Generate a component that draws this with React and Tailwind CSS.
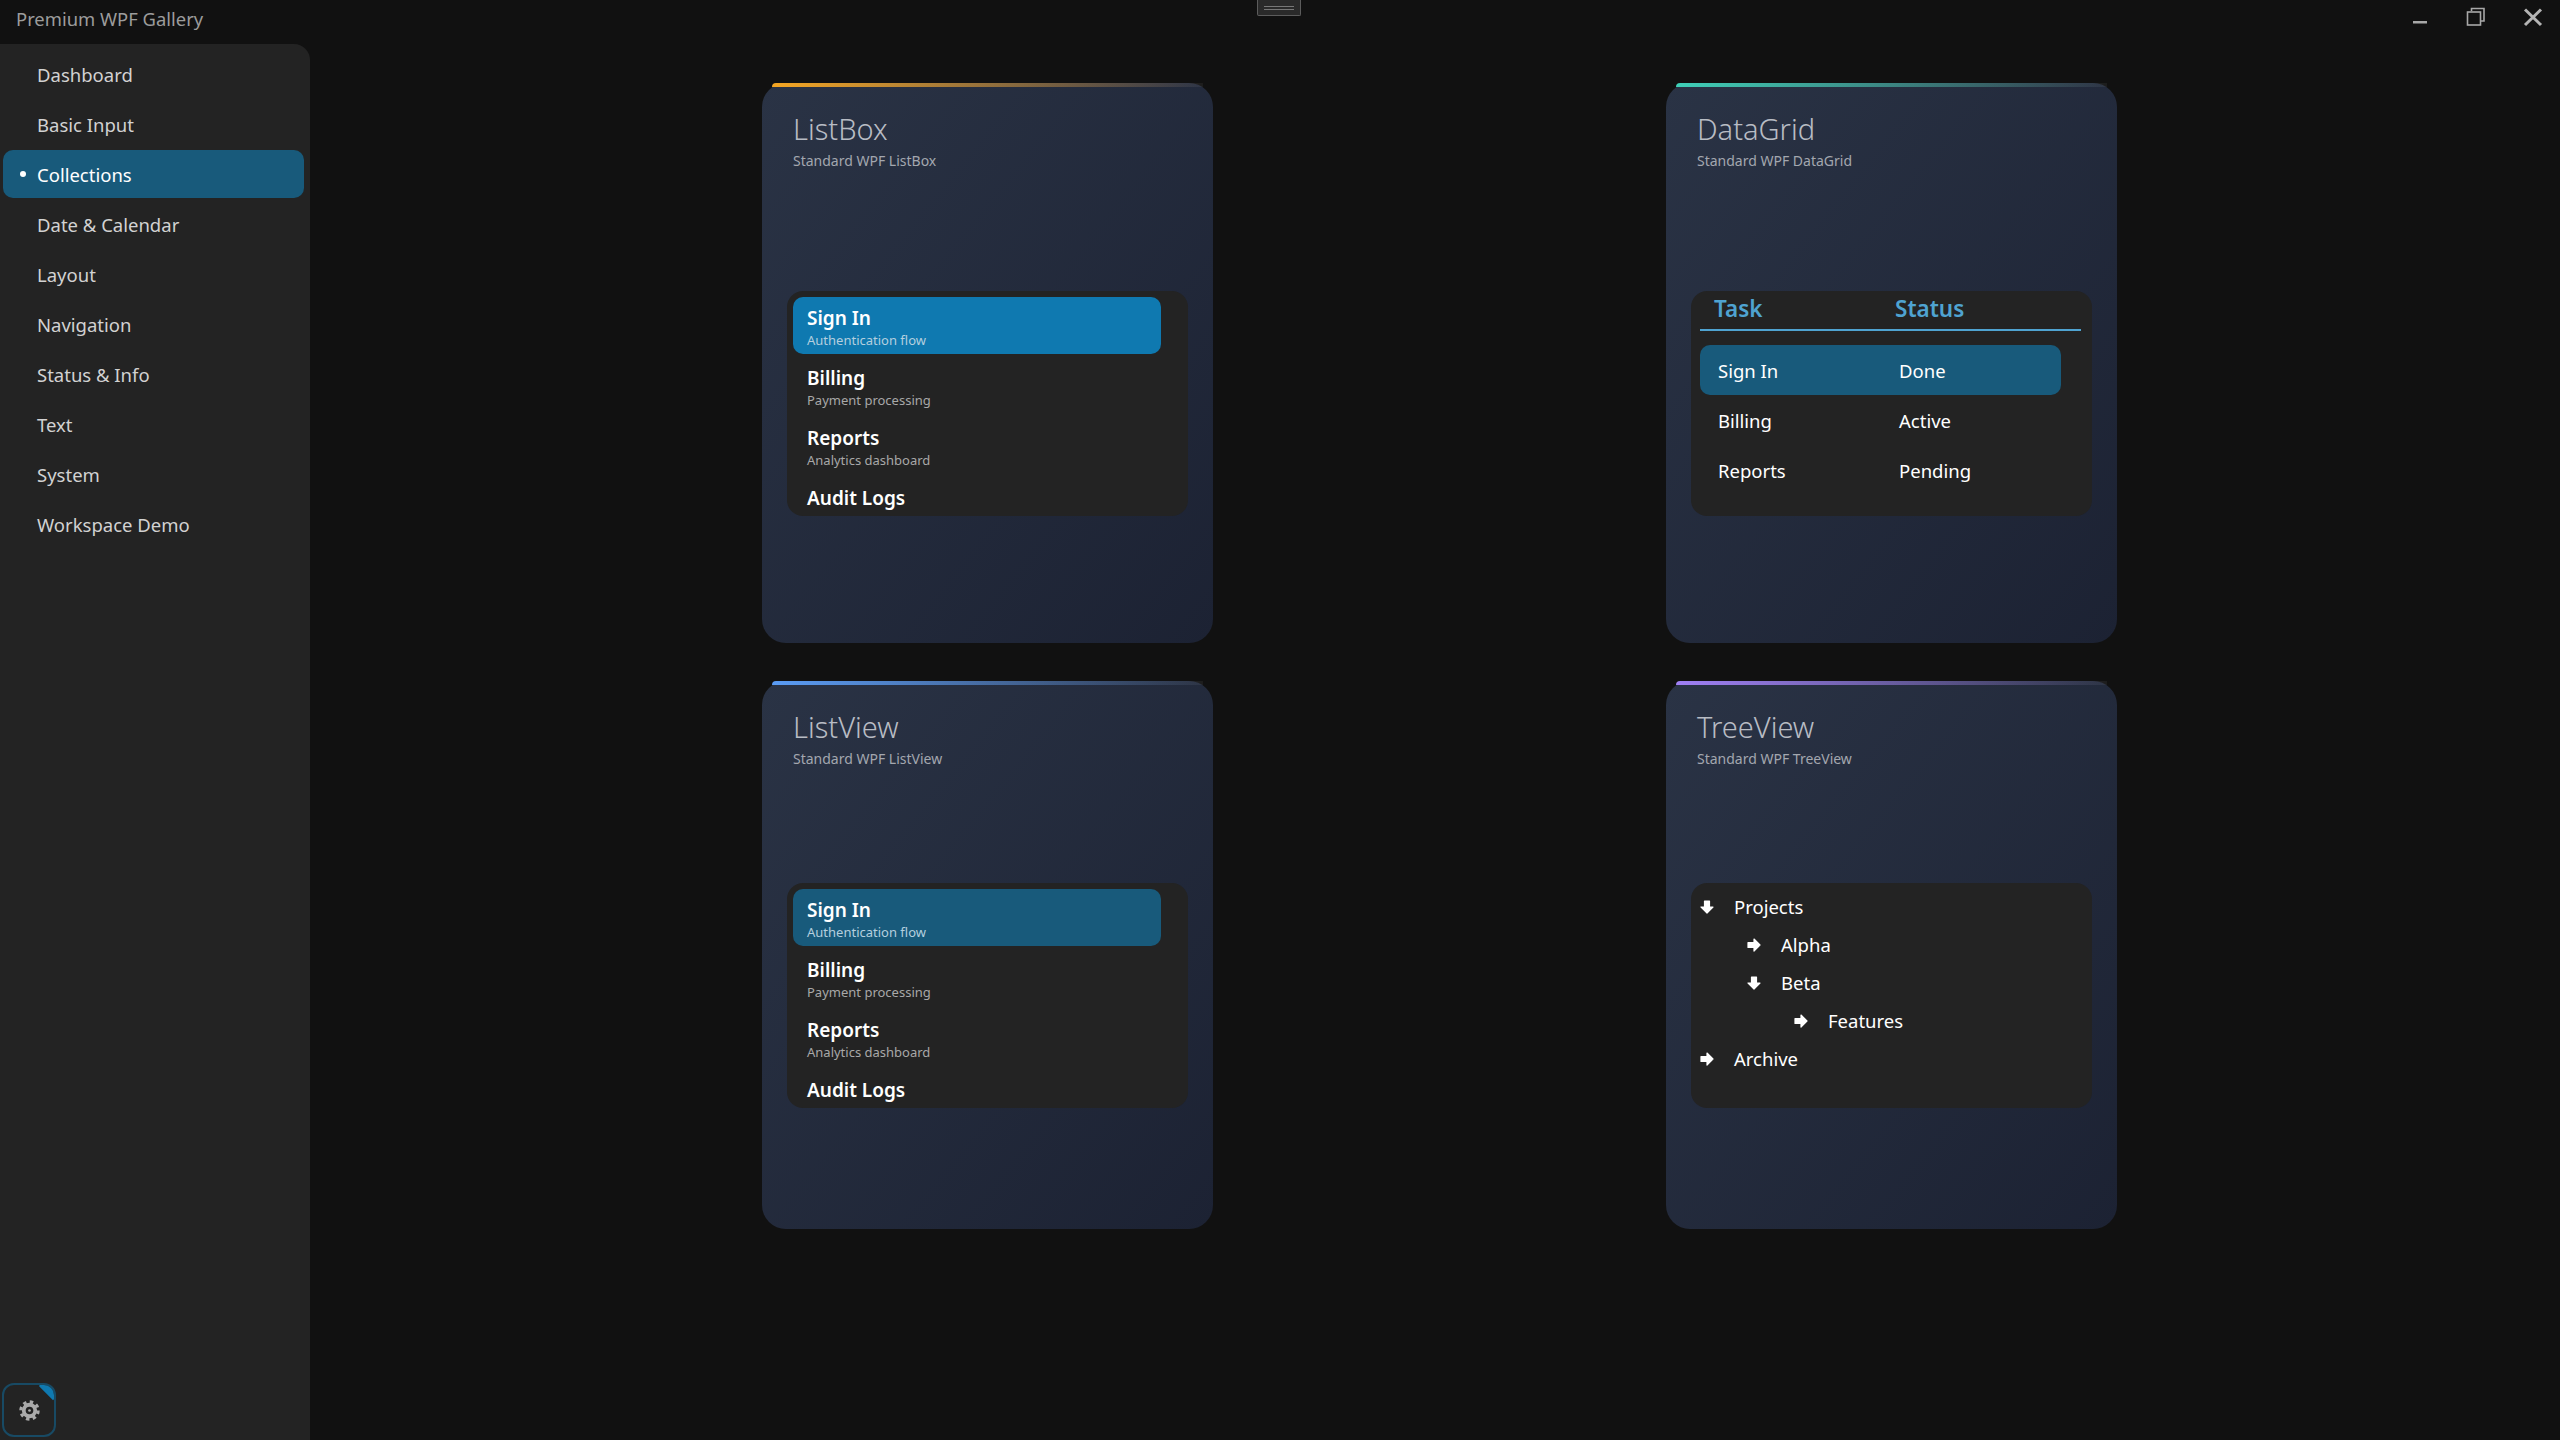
import { Fragment } from 'react';

const NAV = ['Dashboard', 'Basic Input', 'Collections', 'Date & Calendar', 'Layout', 'Navigation', 'Status & Info', 'Text', 'System', 'Workspace Demo'];

const LIST_ITEMS = [
  { title: 'Sign In', sub: 'Authentication flow' },
  { title: 'Billing', sub: 'Payment processing' },
  { title: 'Reports', sub: 'Analytics dashboard' },
  { title: 'Audit Logs', sub: '' },
];

const ROWS = [
  ['Sign In', 'Done'],
  ['Billing', 'Active'],
  ['Reports', 'Pending'],
];

const TREE = [
  { label: 'Projects', depth: 0, open: true },
  { label: 'Alpha', depth: 1 },
  { label: 'Beta', depth: 1, open: true },
  { label: 'Features', depth: 2 },
  { label: 'Archive', depth: 0 },
];

function Arrow({ down }) {
  return (
    <svg width="14" height="14" viewBox="0 0 14 14" className={down ? 'rotate-90' : ''}>
      <path d="M1 4.5H7V1L13 7L7 13V9.5H1Z" fill="#fff" stroke="#fff" strokeWidth="1.2" strokeLinejoin="round" />
    </svg>
  );
}

function Gear() {
  return (
    <svg width="21" height="21" viewBox="0 0 22 22" fill="none" stroke="#ababab">
      <circle cx="11" cy="11" r="9" strokeWidth="3.4" strokeDasharray="3.55 3.52" />
      <circle cx="11" cy="11" r="6" strokeWidth="4" />
      <circle cx="11" cy="11" r="1.4" fill="#ababab" stroke="none" />
    </svg>
  );
}

function Card({ title, stripe, boxTop, height, children }) {
  return (
    <div className={`relative rounded-[24px] bg-gradient-to-br from-[#2a3345] to-[#1c2233] px-[25px] pt-[26px] ${height}`}>
      <div className={`absolute top-0 left-[10px] right-[10px] h-[4px] rounded-tl-[6px] bg-gradient-to-r ${stripe} to-white/5`} />
      <h2 className="pl-[6px] text-[29px] leading-[40px] font-light text-[#b8bcc4]">{title}</h2>
      <p className="pl-[6px] pt-[2px] text-[14px] leading-[20px] text-[#a3a7af]">Standard WPF {title}</p>
      <div className={`${boxTop} h-[225px] overflow-hidden rounded-[16px] bg-[#232323]`}>{children}</div>
    </div>
  );
}

function ItemList({ selected }) {
  return (
    <div className="flex flex-col gap-[3px] pt-[6px] pl-[6px]">
      {LIST_ITEMS.map((item, i) => (
        <div key={item.title} className={`h-[57px] w-[368px] shrink-0 rounded-[10px] px-[14px] pt-[7px] ${i === 0 ? selected : ''}`}>
          <div className="text-[19px] leading-[28px] font-semibold text-white">{item.title}</div>
          <div className={`-mt-[1px] text-[13px] leading-[18px] ${i === 0 ? 'text-[#b4cfdf]' : 'text-[#a8a8a8]'}`}>{item.sub}</div>
        </div>
      ))}
    </div>
  );
}

export default function App() {
  return (
    <div className="relative flex h-[1440px] w-[2560px] flex-col overflow-hidden bg-[#111111] font-['Noto_Sans',sans-serif]">
      {/* Title bar */}
      <div className="flex h-[44px] shrink-0 items-start justify-between">
        <span className="pl-[16px] pt-[4px] text-[18.4px] leading-[30px] text-[#9c9c9c]">Premium WPF Gallery</span>
        <div className="flex items-start pt-[7px] pr-[17px]">
          <svg width="18" height="20" viewBox="0 0 18 20" className="mr-[37px]">
            <rect x="2" y="14" width="14" height="2.5" fill="#a8a8a8" />
          </svg>
          <svg width="20" height="20" viewBox="0 0 20 20" fill="none" stroke="#a8a8a8" strokeWidth="1.6" className="mr-[37px]">
            <path d="M5.5 4V1.5H18V14H15" />
            <rect x="1.5" y="5" width="13" height="13" />
          </svg>
          <svg width="20" height="20" viewBox="0 0 20 20" fill="none" stroke="#b4b4b4" strokeWidth="3">
            <path d="M2 2.5L18 18M18 2.5L2 18" />
          </svg>
        </div>
      </div>

      {/* Drag handle */}
      <div className="absolute left-[1257px] top-0 flex h-[16px] w-[44px] items-center justify-center rounded-b-[2px] border border-t-0 border-[#5c5c5c] bg-[#2a2a2a]">
        <div className="h-[4px] w-[30px] border-y border-[#777777]" />
      </div>

      <div className="flex min-h-0 flex-1">
        {/* Sidebar */}
        <aside className="relative flex w-[310px] shrink-0 flex-col rounded-tr-[16px] bg-[#232323] pl-[3px] pt-[6px]">
          {NAV.map(name => {
            const active = name === 'Collections';
            return (
              <div
                key={name}
                className={`relative flex h-[48px] w-[301px] mb-[2px] items-center rounded-[10px] pl-[34px] pt-[2px] text-[18.5px] ${active ? 'bg-[#185a7b] text-white' : 'text-[#d2d2d2]'}`}
              >
                {active && <span className="absolute left-[17px] top-[21px] h-[6px] w-[6px] rounded-full bg-white" />}
                {name}
              </div>
            );
          })}
          <div className="absolute bottom-[3px] left-[2px] flex h-[54px] w-[54px] items-center justify-center overflow-hidden rounded-[12px] border-2 border-[#184a64]">
            <div className="absolute -right-[9px] -top-[9px] h-[20px] w-[20px] rotate-45 bg-[#0f79b0]" />
            <div className="pt-[1px]">
              <Gear />
            </div>
          </div>
        </aside>

        {/* Gallery */}
        <main className="grid flex-1 grid-cols-[451px_451px] grid-rows-[560px_548px] content-start gap-x-[453px] gap-y-[38px] pl-[452px] pt-[39px]">
          <Card title="ListBox" stripe="from-[#f5a623]" boxTop="mt-[120px]" height="h-[560px]">
            <ItemList selected="bg-[#0f79b0]" />
          </Card>

          <Card title="DataGrid" stripe="from-[#3fd0b8]" boxTop="mt-[120px]" height="h-[560px]">
            <div className="pl-[9px] pr-[11px]">
              <div className="grid grid-cols-[181px_1fr] border-b-2 border-[#4fa3d1] pl-[14px] pb-[3px] text-[22.5px] leading-[35px] font-semibold text-[#4fa3d1]">
                <span>Task</span>
                <span>Status</span>
              </div>
              <div className="pt-[14px]">
                {ROWS.map((row, i) => (
                  <div key={row[0]} className={`grid h-[50px] w-[361px] grid-cols-[181px_1fr] items-center rounded-[10px] pl-[18px] pt-[1px] text-[18.5px] text-white ${i === 0 ? 'bg-[#185a7b]' : ''}`}>
                    <span>{row[0]}</span>
                    <span>{row[1]}</span>
                  </div>
                ))}
              </div>
            </div>
          </Card>

          <Card title="ListView" stripe="from-[#5a9cf5]" boxTop="mt-[114px]" height="h-[548px]">
            <ItemList selected="bg-[#185a7b]" />
          </Card>

          <Card title="TreeView" stripe="from-[#a080f5]" boxTop="mt-[114px]" height="h-[548px]">
            <div className="flex flex-col pt-[5px] pl-[9px]">
              {TREE.map(node => (
                <Fragment key={node.label}>
                  <div className={`flex h-[38px] items-center text-[18.5px] text-white ${node.depth === 1 ? 'pl-[47px]' : node.depth === 2 ? 'pl-[94px]' : ''}`}>
                    <Arrow down={node.open} />
                    <span className="ml-[20px]">{node.label}</span>
                  </div>
                </Fragment>
              ))}
            </div>
          </Card>
        </main>
      </div>
    </div>
  );
}
